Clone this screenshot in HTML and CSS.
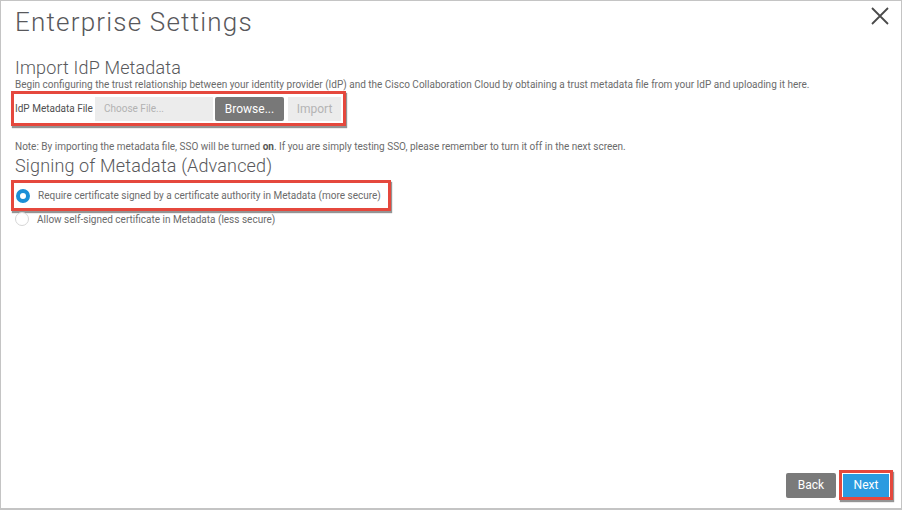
FILE: index.html
```html
<!DOCTYPE html>
<html>
<head>
<meta charset="utf-8">
<link rel="stylesheet" href="styles.css">
</head>
<body>
<div class="frame">
  <header class="top">
    <h1 class="title">Enterprise Settings</h1>
    <button class="close" aria-label="Close">
      <svg width="18" height="18" viewBox="0 0 18 18"><path d="M1 1L17 17M17 1L1 17" stroke="#4a4a4a" stroke-width="1.8" fill="none"/></svg>
    </button>
  </header>
  <section class="import">
    <h2 class="section-title">Import IdP Metadata</h2>
    <p class="desc">Begin configuring the trust relationship between your identity provider (IdP) and the Cisco Collaboration Cloud by obtaining a trust metadata file from your IdP and uploading it here.</p>
    <div class="highlight file-row">
      <span class="file-label">IdP Metadata File</span>
      <span class="file-input">Choose File...</span>
      <span class="btn btn-browse">Browse...</span>
      <span class="btn btn-import">Import</span>
    </div>
    <p class="note">Note: By importing the metadata file, SSO will be turned <b>on</b>. If you are simply testing SSO, please remember to turn it off in the next screen.</p>
  </section>
  <section class="signing">
    <h2 class="section-title">Signing of Metadata (Advanced)</h2>
    <div class="highlight radio-box">
      <label class="radio-row"><span class="radio checked"></span>Require certificate signed by a certificate authority in Metadata (more secure)</label>
    </div>
    <label class="radio-row plain"><span class="radio"></span>Allow self-signed certificate in Metadata (less secure)</label>
  </section>
  <footer class="actions">
    <span class="btn btn-back">Back</span>
    <span class="highlight next-wrap"><span class="btn btn-next">Next</span></span>
  </footer>
</div>
</body>
</html>
```
FILE: styles.css
```css
* { box-sizing: border-box; }
html, body { margin: 0; padding: 0; background: #fff; }
body { font-family: Roboto, "Liberation Sans", Arial, sans-serif; color: #58585b; }
.frame {
  width: 902px; height: 510px;
  border: 1px solid #c4c4c4;
  border-bottom-width: 2px;
  display: flex; flex-direction: column;
  padding: 0 0 0 14px;
}
.top { display: flex; justify-content: space-between; align-items: flex-start; }
.title { margin: 6px 0 0 0; font-weight: 300; font-size: 26px; line-height: 30px; color: #58585b; letter-spacing: 1.2px; white-space: nowrap; }
.close { border: 0; background: none; padding: 0; margin: 6px 12px 0 0; width: 18px; height: 18px; }
.close svg { display: block; }
.section-title { margin: 0; font-weight: 300; font-size: 18px; line-height: 22px; color: #58585b; white-space: nowrap; letter-spacing: 0.15px; }
.import .section-title { margin-top: 20px; }
.desc { margin: 0; font-size: 10px; line-height: 12px; color: #6b6b6b; white-space: nowrap; }
.highlight { border: 3px solid #e5483d; box-shadow: 1px 2px 1px rgba(60,60,60,0.55); }
.file-row {
  display: flex; align-items: center;
  width: 335px; height: 35px;
  margin: 0 0 0 -4px; padding: 0 0 0 1px;
}
.file-label { width: 80px; font-size: 10px; color: #4f4f4f; white-space: nowrap; }
.file-input { width: 118px; height: 24px; background: #ececec; color: #b2b2b2; font-size: 10px; line-height: 24px; padding-left: 9px; }
.btn { display: inline-flex; align-items: center; justify-content: center; font-size: 12px; height: 24px; white-space: nowrap; }
.btn-browse { width: 69px; margin-left: 2px; background: #787878; color: #fff; border-radius: 2px; }
.btn-import { width: 53px; margin-left: 4px; background: #ececec; color: #b4b4b4; }
.note { margin: 14px 0 0 0; font-size: 10px; line-height: 14px; color: #6b6b6b; white-space: nowrap; }
.note b { font-weight: 700; color: #555; }
.signing .section-title { margin-top: 1px; }
.radio-box { width: 380px; height: 31px; margin: 3px 0 0 -4px; display: flex; align-items: center; padding-left: 2px; }
.radio-row { display: flex; align-items: center; font-size: 10px; color: #6b6b6b; white-space: nowrap; }
.radio { width: 14px; height: 14px; border-radius: 50%; border: 1px solid #d6d6d6; margin-right: 8px; background: #fff; flex: none; }
.radio.checked { border: 4px solid #1b8fd6; }
.radio-row.plain { margin-top: 1px; }
.actions { margin-top: auto; display: flex; justify-content: flex-end; align-items: center; gap: 3px; padding: 0 8px 8px 0; }
.btn-back { width: 50px; height: 25px; background: #7a7a7a; color: #fff; border-radius: 2px; font-size: 12px; }
.next-wrap { display: inline-flex; padding: 0; width: 54px; height: 30px; align-items: center; justify-content: center; }
.btn-next { width: 46px; height: 23px; background: #2b9be0; color: #fff; font-size: 12px; }
```
